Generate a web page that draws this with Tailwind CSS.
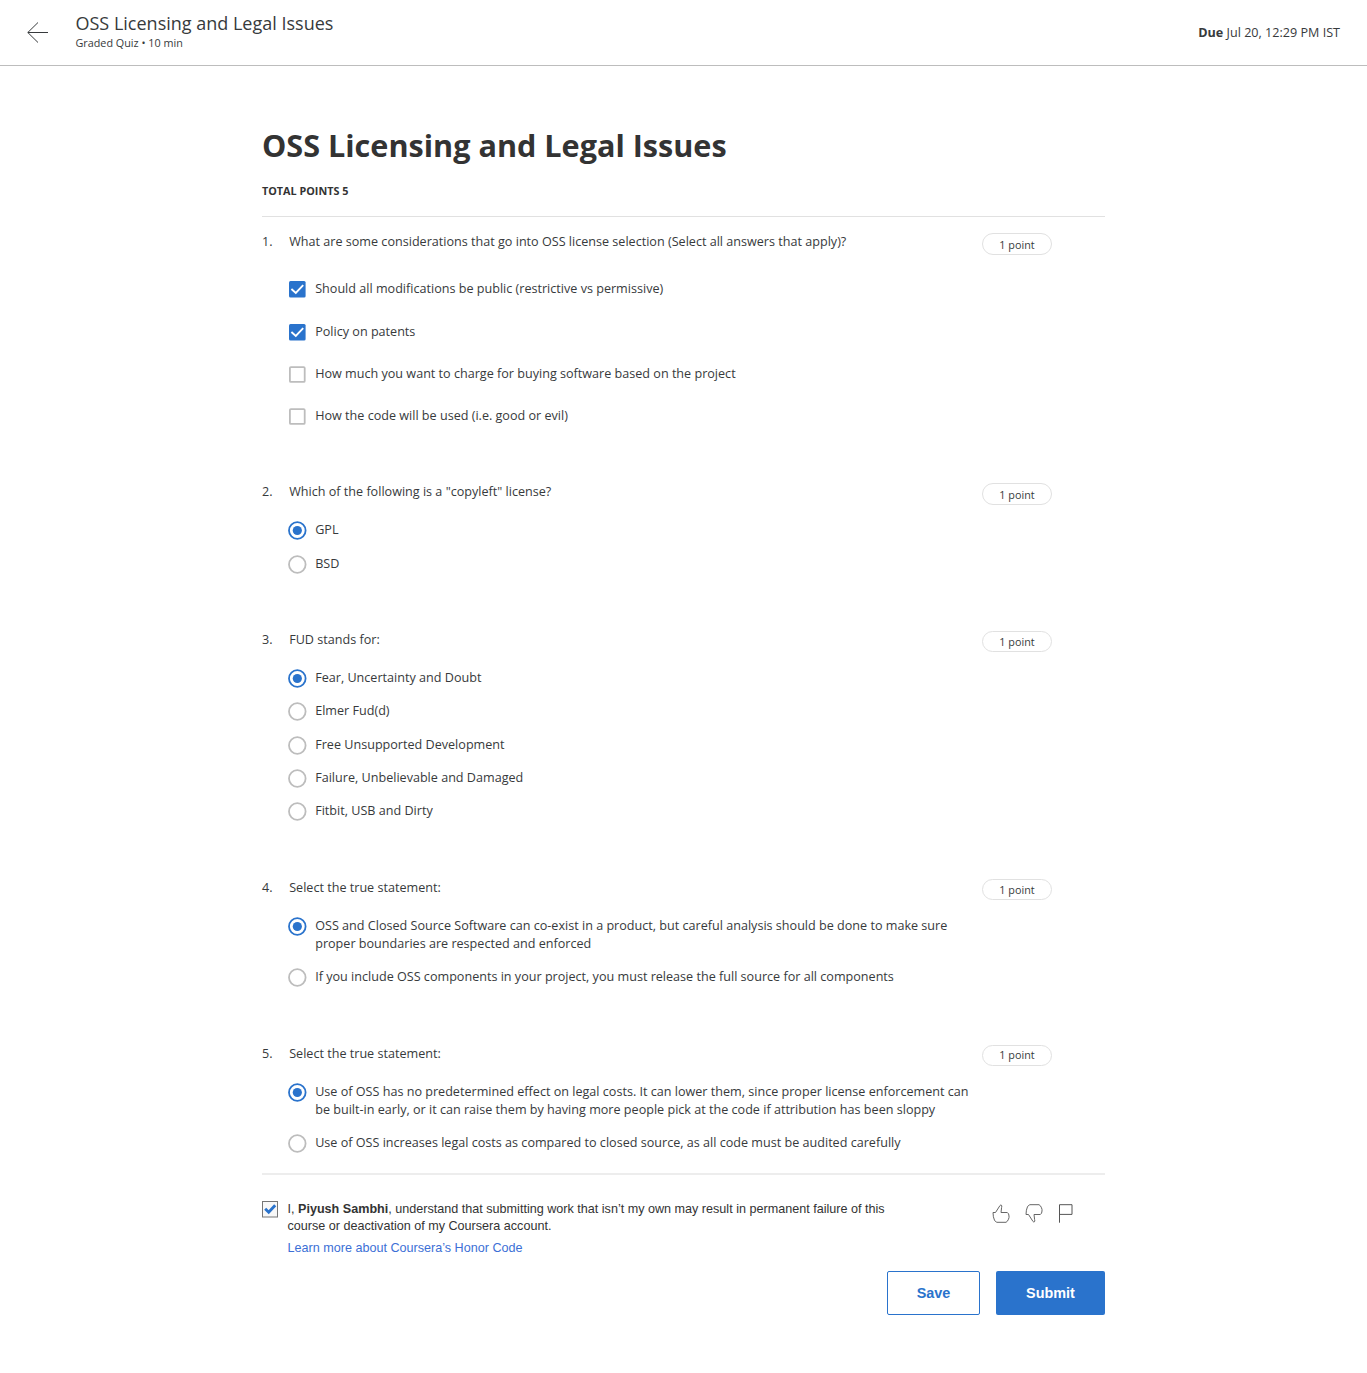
<!DOCTYPE html>
<html lang="en">
<head>
<meta charset="utf-8">
<title>OSS Licensing and Legal Issues</title>
<script src="https://cdn.jsdelivr.net/npm/@tailwindcss/browser@4"></script>
</head>
<body class="bg-white font-['Open_Sans',sans-serif] text-[12.6px] leading-[18px] text-[#373a3c]">
<svg class="hidden">
  <symbol id="check-on" viewBox="0 0 17 17"><rect width="16.6" height="16.6" rx="1.5" fill="#2a73cc"/><path d="M2.4 8 6.8 12 14.2 4.2" fill="none" stroke="#fff" stroke-width="1.9"/></symbol>
  <symbol id="check-off" viewBox="0 0 17 17"><rect x=".9" y="1.1" width="14.8" height="14.8" rx="1" fill="#fff" stroke="#bdbdbd" stroke-width="1.8"/></symbol>
  <symbol id="radio-on" viewBox="0 0 19 19"><circle cx="9.3" cy="9.5" r="8.3" fill="#fff" stroke="#2a73cc" stroke-width="1.8"/><circle cx="9.3" cy="9.5" r="4.6" fill="#2a73cc"/></symbol>
  <symbol id="radio-off" viewBox="0 0 19 19"><circle cx="9.3" cy="9.5" r="8.3" fill="#fff" stroke="#bdbdbd" stroke-width="1.8"/></symbol>
</svg>

<header class="flex h-[66px] justify-between border-b border-[#bdbdbd] pl-[27px] pr-[27px]">
  <div class="flex">
    <svg class="mt-[22px] h-[21px] w-[21px]" viewBox="0 0 21 21" fill="none" stroke="#373a3c" stroke-width="1"><path d="M11 .5 .8 10.5 11 20.5M.8 10.5H21"/></svg>
    <div class="ml-[27.5px] pt-[11px]">
      <div class="text-[18px] leading-6">OSS Licensing and Legal Issues</div>
      <div class="text-[10.8px] leading-4">Graded Quiz • 10 min</div>
    </div>
  </div>
  <div class="pt-6"><b>Due</b> Jul 20, 12:29 PM IST</div>
</header>

<main class="ml-[262px] w-[843px]">
  <h1 class="pt-[57px] text-[30.6px] font-bold leading-[44px] text-[#333]">OSS Licensing and Legal Issues</h1>
  <div class="mt-[15px] h-[35px] border-b border-[#e1e1e1] text-[10.8px] font-bold text-[#333]">TOTAL POINTS 5</div>

  <section class="flex h-[250px] pt-4">
    <div class="w-[27.2px]">1.</div>
    <div class="w-[692.8px]">
      <div>What are some considerations that go into OSS license selection (Select all answers that apply)?</div>
      <div class="mt-[29.4px] flex flex-col gap-[24.3px]">
        <label class="flex"><svg class="mt-px mr-[9px] -mb-2 h-[17px] w-[17px]"><use href="#check-on"/></svg>Should all modifications be public (restrictive vs permissive)</label>
        <label class="flex"><svg class="mt-px mr-[9px] -mb-2 h-[17px] w-[17px]"><use href="#check-on"/></svg>Policy on patents</label>
        <label class="flex"><svg class="mt-px mr-[9px] -mb-2 h-[17px] w-[17px]"><use href="#check-off"/></svg>How much you want to charge for buying software based on the project</label>
        <label class="flex"><svg class="mt-px mr-[9px] -mb-2 h-[17px] w-[17px]"><use href="#check-off"/></svg>How the code will be used (i.e. good or evil)</label>
      </div>
    </div>
    <div class="flex h-[22px] w-[70px] items-center justify-center rounded-full border border-[#e1e1e1] pt-[2px] text-[10.8px]">1 point</div>
  </section>

  <section class="flex h-[148px] pt-4">
    <div class="w-[27.2px]">2.</div>
    <div class="w-[692.8px]">
      <div>Which of the following is a "copyleft" license?</div>
      <div class="-ml-px mt-5 flex flex-col gap-[15.7px]">
        <label class="flex"><svg class="mr-2 h-[19px] w-[19px] -mb-2"><use href="#radio-on"/></svg>GPL</label>
        <label class="flex"><svg class="mr-2 h-[19px] w-[19px] -mb-2"><use href="#radio-off"/></svg>BSD</label>
      </div>
    </div>
    <div class="flex h-[22px] w-[70px] items-center justify-center rounded-full border border-[#e1e1e1] pt-[2px] text-[10.8px]">1 point</div>
  </section>

  <section class="flex h-[247.6px] pt-4">
    <div class="w-[27.2px]">3.</div>
    <div class="w-[692.8px]">
      <div>FUD stands for:</div>
      <div class="-ml-px mt-5 flex flex-col gap-[15.3px]">
        <label class="flex"><svg class="mr-2 h-[19px] w-[19px] -mb-2"><use href="#radio-on"/></svg>Fear, Uncertainty and Doubt</label>
        <label class="flex"><svg class="mr-2 h-[19px] w-[19px] -mb-2"><use href="#radio-off"/></svg>Elmer Fud(d)</label>
        <label class="flex"><svg class="mr-2 h-[19px] w-[19px] -mb-2"><use href="#radio-off"/></svg>Free Unsupported Development</label>
        <label class="flex"><svg class="mr-2 h-[19px] w-[19px] -mb-2"><use href="#radio-off"/></svg>Failure, Unbelievable and Damaged</label>
        <label class="flex"><svg class="mr-2 h-[19px] w-[19px] -mb-2"><use href="#radio-off"/></svg>Fitbit, USB and Dirty</label>
      </div>
    </div>
    <div class="flex h-[21px] w-[70px] items-center justify-center rounded-full border border-[#e1e1e1] pt-px text-[10.8px]">1 point</div>
  </section>

  <section class="flex h-[166px] pt-4">
    <div class="w-[27.2px]">4.</div>
    <div class="w-[692.8px]">
      <div>Select the true statement:</div>
      <div class="-ml-px mt-5 flex flex-col gap-[15.7px]">
        <label class="flex"><svg class="mr-2 h-[19px] w-[19px] -mb-2"><use href="#radio-on"/></svg><span>OSS and Closed Source Software can co-exist in a product, but careful analysis should be done to make sure<br>proper boundaries are respected and enforced</span></label>
        <label class="flex"><svg class="mr-2 h-[19px] w-[19px] -mb-2"><use href="#radio-off"/></svg>If you include OSS components in your project, you must release the full source for all components</label>
      </div>
    </div>
    <div class="flex h-[21px] w-[70px] items-center justify-center rounded-full border border-[#e1e1e1] pt-px text-[10.8px]">1 point</div>
  </section>

  <section class="flex h-[146.4px] border-b-2 border-[#ededed] pt-4">
    <div class="w-[27.2px]">5.</div>
    <div class="w-[692.8px]">
      <div>Select the true statement:</div>
      <div class="-ml-px mt-5 flex flex-col gap-[15.2px]">
        <label class="flex"><svg class="mr-2 h-[19px] w-[19px] -mb-2"><use href="#radio-on"/></svg><span>Use of OSS has no predetermined effect on legal costs. It can lower them, since proper license enforcement can<br>be built-in early, or it can raise them by having more people pick at the code if attribution has been sloppy</span></label>
        <label class="flex"><svg class="mr-2 h-[19px] w-[19px] -mb-2"><use href="#radio-off"/></svg>Use of OSS increases legal costs as compared to closed source, as all code must be audited carefully</label>
      </div>
    </div>
    <div class="flex h-[21px] w-[70px] items-center justify-center rounded-full border border-[#e1e1e1] text-[10.8px]">1 point</div>
  </section>

  <div class="flex h-[96px] pt-[26px] font-['Liberation_Sans',Arial,sans-serif] text-[#333]">
    <svg class="h-[17px] w-[16px]" viewBox="0 0 16 17"><rect x=".5" y=".5" width="15" height="15.5" fill="#f8f8f8" stroke="#767676"/><path d="M3.2 7.8 6.7 11.2 13.2 4.2" fill="none" stroke="#2a73cc" stroke-width="2.9"/></svg>
    <div class="ml-[9.5px] w-[704.5px] leading-[17px]">
      <p>I, <b>Piyush Sambhi</b>, understand that submitting work that isn’t my own may result in permanent failure of this<br>course or deactivation of my Coursera account.</p>
      <a class="mt-[5px] block text-[#3c6fd6]">Learn more about Coursera’s Honor Code</a>
    </div>
    <div class="mt-[3px] flex gap-[15.4px]">
      <svg class="h-[19px] w-[18px]" viewBox="0 0 18 19" fill="none" stroke="#666" stroke-width="1"><path d="M1 8.5H3.5L8 1.5Q8.6.8 9.4 1.2Q10.2 1.7 9.6 3.4L9 8.5H15.3Q17 9.5 17 12V13.5Q16.8 15 15.4 17.2L14 18.3H4.8L2.6 16.6Q1 13 1 8.5Z"/></svg>
      <svg class="h-[19px] w-[18px] -scale-y-100" viewBox="0 0 18 19" fill="none" stroke="#666" stroke-width="1"><path d="M1 8.5H3.5L8 1.5Q8.6.8 9.4 1.2Q10.2 1.7 9.6 3.4L9 8.5H15.3Q17 9.5 17 12V13.5Q16.8 15 15.4 17.2L14 18.3H4.8L2.6 16.6Q1 13 1 8.5Z"/></svg>
      <svg class="h-[19px] w-[14px]" viewBox="0 0 14 19" fill="none" stroke="#555" stroke-width="1"><path d="M.5 18.7V.7H13V10.4H.5"/></svg>
    </div>
  </div>

  <div class="flex justify-end gap-4 font-['Liberation_Sans',Arial,sans-serif] text-[14.4px] font-bold">
    <div role="button" class="flex h-11 w-[93px] items-center justify-center rounded-[2px] border border-[#2a73cc] text-[#2a73cc]">Save</div>
    <div role="button" class="flex h-11 w-[109px] items-center justify-center rounded-[2px] bg-[#2a73cc] text-white">Submit</div>
  </div>
</main>
</body>
</html>
